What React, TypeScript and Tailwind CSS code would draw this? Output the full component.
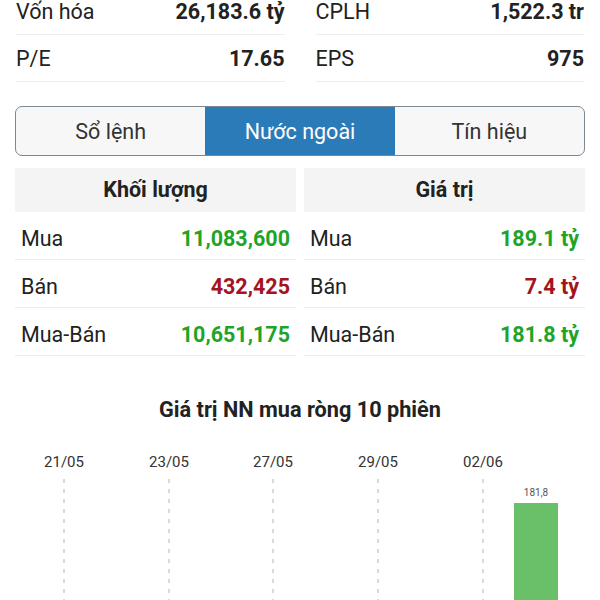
const topStats = [
  [
    { label: 'Vốn hóa', value: '26,183.6 tỷ' },
    { label: 'P/E', value: '17.65' },
  ],
  [
    { label: 'CPLH', value: '1,522.3 tr' },
    { label: 'EPS', value: '975' },
  ],
];

const tabs = ['Sổ lệnh', 'Nước ngoài', 'Tín hiệu'];

type Row = { label: string; value: string; up: boolean };

const volumeRows: Row[] = [
  { label: 'Mua', value: '11,083,600', up: true },
  { label: 'Bán', value: '432,425', up: false },
  { label: 'Mua-Bán', value: '10,651,175', up: true },
];

const valueRows: Row[] = [
  { label: 'Mua', value: '189.1 tỷ', up: true },
  { label: 'Bán', value: '7.4 tỷ', up: false },
  { label: 'Mua-Bán', value: '181.8 tỷ', up: true },
];

const dates = [
  { label: '21/05', x: 64 },
  { label: '23/05', x: 169 },
  { label: '27/05', x: 273 },
  { label: '29/05', x: 378 },
  { label: '02/06', x: 483 },
];

function FlowTable({ title, rows }: { title: string; rows: Row[] }) {
  return (
    <div className="flex flex-col">
      <div className="h-[44px] bg-[#f4f4f4] flex items-center justify-center text-[21.5px] font-bold text-[#222]">
        {title}
      </div>
      {rows.map((r) => (
        <div
          key={r.label}
          className="h-[48px] pt-[7px] flex items-center justify-between px-[6px] border-b border-[#ececec]"
        >
          <span className="text-[21.5px] text-[#222]">{r.label}</span>
          <span
            className={
              r.up
                ? 'text-[21.5px] font-bold text-[#1fa42a]'
                : 'text-[21.5px] font-bold text-[#a3141f]'
            }
          >
            {r.value}
          </span>
        </div>
      ))}
    </div>
  );
}

export default function App() {
  return (
    <div
      className="w-[600px] h-[600px] overflow-hidden bg-white"
      style={{ fontFamily: 'Roboto, "Noto Sans", sans-serif' }}
    >
      <div className="grid grid-cols-2 gap-x-[31px] px-4 -mt-[12px]">
        {topStats.map((col, i) => (
          <div key={i} className="flex flex-col">
            {col.map((s) => (
              <div
                key={s.label}
                className="h-[47px] pt-[3px] flex items-center justify-between border-b border-[#ededed]"
              >
                <span className="text-[21.5px] text-[#222]">{s.label}</span>
                <span className="text-[21.5px] font-bold text-[#222]">{s.value}</span>
              </div>
            ))}
          </div>
        ))}
      </div>

      <div className="mx-[15px] mt-[24px] h-[50px] flex border border-[#7c8995] rounded-[7px] overflow-hidden bg-[#f7f7f7]">
        {tabs.map((t, i) => (
          <div
            key={t}
            className={
              i === 1
                ? 'flex-1 flex items-center justify-center pt-[2px] bg-[#2b7bb9] text-white text-[21.5px]'
                : 'flex-1 flex items-center justify-center pt-[2px] text-[#333] text-[21.5px]'
            }
          >
            {t}
          </div>
        ))}
      </div>

      <div className="grid grid-cols-2 gap-x-[8px] px-[15px] mt-[12px]">
        <FlowTable title="Khối lượng" rows={volumeRows} />
        <FlowTable title="Giá trị" rows={valueRows} />
      </div>

      <div className="mt-[38px] text-center text-[21.7px] font-bold text-[#222]">
        Giá trị NN mua ròng 10 phiên
      </div>

      <svg width="600" height="180" className="block">
        {dates.map((d) => (
          <g key={d.label}>
            <text
              x={d.x}
              y={40}
              textAnchor="middle"
              fontSize="15"
              fill="#333"
              fontFamily="Roboto, sans-serif"
            >
              {d.label}
            </text>
            <line
              x1={d.x}
              y1={52}
              x2={d.x}
              y2={180}
              stroke="#b4b4b4"
              strokeWidth="1"
              strokeDasharray="4 6"
            />
          </g>
        ))}
        <rect x="514" y="76" width="44" height="110" fill="#6abf69" />
        <text
          x="536"
          y="69"
          textAnchor="middle"
          fontSize="10"
          fill="#555"
          fontFamily="Roboto, sans-serif"
        >
          181,8
        </text>
      </svg>
    </div>
  );
}
